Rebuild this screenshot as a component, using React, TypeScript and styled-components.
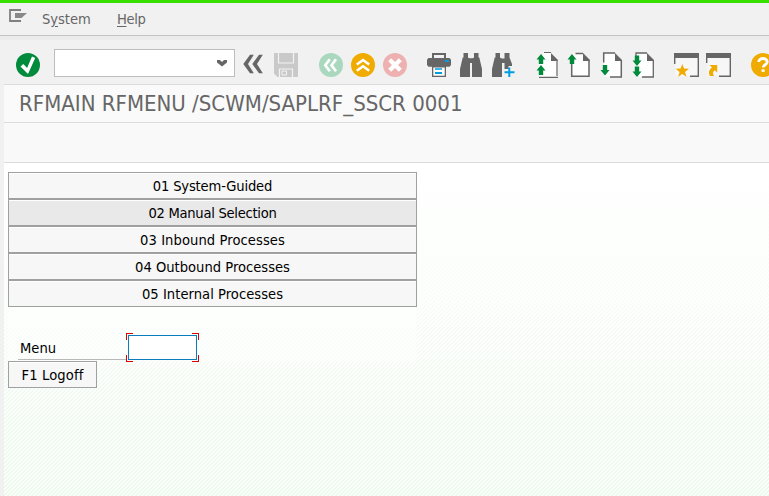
import React from 'react';
import styled, { createGlobalStyle } from 'styled-components';

const GlobalStyle = createGlobalStyle`
  * { box-sizing: border-box; }
  html, body { margin: 0; padding: 0; }
  body { overflow: hidden; background: #f1f1f1; font-family: "DejaVu Sans Condensed", "DejaVu Sans", sans-serif; font-stretch: condensed; }
`;

const Window = styled.div`
  width: 769px;
  height: 496px;
  overflow: hidden;
  display: flex;
  flex-direction: column;
  background: #f1f1f1;
  border-top: 3px solid #38e000;
`;

const MenuBar = styled.div`
  height: 37px;
  flex: none;
  display: flex;
  align-items: flex-start;
  padding-left: 9px;
  border-bottom: 4px solid #ebebeb;
  box-shadow: inset 0 -1px 0 #c3c3c3;
`;

const MenuGlyph = styled.svg`
  width: 18px;
  height: 13px;
  margin: 6px 15px 0 0;
  flex: none;
`;

const MenuItem = styled.span<{ $w: number; $ls: number }>`
  width: ${p => p.$w}px;
  margin: 7px 26px 0 0;
  font-size: 14.6px;
  line-height: 18px;
  letter-spacing: ${p => p.$ls}px;
  color: #666;
  white-space: nowrap;
  u { text-underline-offset: 2px; text-decoration-thickness: 1px; }
`;

const Toolbar = styled.div`
  height: 44px;
  flex: none;
  display: flex;
  align-items: flex-start;
  padding: 9px 0 0 16px;
`;

const Icon = styled.svg<{ $gap?: number }>`
  width: 24px;
  height: 24px;
  flex: none;
  margin: 4px 0 0 ${p => p.$gap ?? 8}px;
  overflow: visible;
`;

const Command = styled.div`
  width: 181px;
  height: 28px;
  flex: none;
  margin-left: 14px;
  padding-right: 7px;
  display: flex;
  align-items: center;
  justify-content: flex-end;
  background: #fff;
  border: 1px solid #bdbdbd;
`;

const Main = styled.div`
  margin-left: 4px;
  flex: 1;
  display: flex;
  flex-direction: column;
`;

const TitleBar = styled.div`
  height: 38px;
  flex: none;
  padding-left: 15px;
  background: #fafafa;
  border-top: 1px solid #dcdcdc;
  font-size: 22px;
  line-height: 37px;
  letter-spacing: 0.01px;
  color: #666;
  white-space: nowrap;
`;

const AppBar = styled.div`
  height: 41px;
  flex: none;
  background: #f9f9f9;
  border: solid #dcdcdc;
  border-width: 1px 0;
`;

const Canvas = styled.div`
  flex: 1;
  padding: 9px 0 0 4px;
  background:
    linear-gradient(180deg, #fff 0%, rgba(255,255,255,.72) 30%, rgba(255,255,255,.42) 60%, rgba(255,255,255,.12) 85%, rgba(255,255,255,0) 100%),
    repeating-linear-gradient(135deg, #ebf9eb 0, #ebf9eb 1.414px, #fdfffd 1.414px, #fdfffd 2.828px);
`;

const Panel = styled.div`
  width: 409px;
  height: 190px;
  background: rgba(255,255,255,.45);
`;

const ScreenButton = styled.button<{ $active?: boolean; $ls?: number; $w?: number }>`
  display: block;
  width: ${p => p.$w ?? 409}px;
  height: 27px;
  padding: 0;
  border: 1px solid #a0a0a0;
  border-radius: 0;
  box-shadow: inset 0 1px 0 #fff;
  background: ${p => (p.$active ? '#e9e9e9' : '#f7f7f7')};
  color: #000;
  font-family: inherit;
  font-stretch: condensed;
  font-size: 14.6px;
  line-height: 25px;
  letter-spacing: ${p => p.$ls ?? 0}px;
  text-align: center;
  white-space: nowrap;
`;

const FieldRow = styled.div`
  display: flex;
  margin: 26px 0 0 10px;
  height: 28px;
`;

const Label = styled.label`
  width: 108px;
  height: 27px;
  border-bottom: 1px solid #b9b9b9;
  padding-left: 2px;
  font-size: 14.6px;
  line-height: 30px;
`;

const Focus = styled.div`
  --h: linear-gradient(#d00, #d00);
  width: 73px;
  height: 29px;
  padding: 2px;
  background:
    var(--h) 0 0 / 7px 1px, var(--h) 0 0 / 1px 7px,
    var(--h) 100% 0 / 7px 1px, var(--h) 100% 0 / 1px 7px,
    var(--h) 0 100% / 7px 1px, var(--h) 0 100% / 1px 7px,
    var(--h) 100% 100% / 7px 1px, var(--h) 100% 100% / 1px 7px;
  background-repeat: no-repeat;
`;

const Input = styled.input`
  display: block;
  width: 69px;
  height: 25px;
  padding: 0 3px;
  border: 1px solid #0a7dbe;
  border-radius: 0;
  background: #fff;
  outline: none;
`;

const G = '#666';
const GREEN = '#008a3b';
const ORANGE = '#f0ab00';
const BLUE = '#009de0';

const Binoculars = () => (
  <>
    <path d="M4.500 0h4.500v4.500l2 1.500v18H1v-8L3.700 4.500h.8z" fill={G} />
    <path d="M9.500 5.500h5V10h-5z" fill={G} />
  </>
);

const UpArrow = ({ x, y }: { x: number; y: number }) => (
  <path transform={`translate(${x} ${y})`} d="M4.500 0L9 5.500H6.700V10H2.300V5.500H0z" fill={GREEN} />
);
const DownArrow = ({ x, y }: { x: number; y: number }) => (
  <path transform={`translate(${x} ${y})`} d="M4.500 10.500L9 5H6.700V0H2.300v5H0z" fill={GREEN} />
);

const Fold = () => <path d="M16 0l6.500 6.500V8H16z" fill={G} />;

const BUTTONS = [
  { text: '01 System-Guided', spacing: -0.16 },
  { text: '02 Manual Selection', active: true, spacing: -0.27 },
  { text: '03 Inbound Processes', spacing: 0.08 },
  { text: '04 Outbound Processes', spacing: 0 },
  { text: '05 Internal Processes', spacing: 0.04 },
];

export default function App() {
  return (
    <>
      <GlobalStyle />
      <Window>
        <MenuBar>
          <MenuGlyph viewBox="0 0 18 13">
            <path d="M12 1H1v11h11" fill="none" stroke="#808080" strokeWidth="1.800" />
            <path d="M6 4h12l-5.500 5H6z" fill="#888" />
          </MenuGlyph>
          <MenuItem $w={49} $ls={-0.05}>S<u>y</u>stem</MenuItem>
          <MenuItem $w={28} $ls={-0.4}><u>H</u>elp</MenuItem>
        </MenuBar>
        <Toolbar>
          <Icon $gap={0} viewBox="0 0 24 24">
            <circle cx="12" cy="12" r="12" fill={GREEN} />
            <path d="M4.500 13.600l2.800-2.500 3.800 3.900L16 3.600 19.200 5 12 21z" fill="#fff" />
          </Icon>
          <Command>
            <svg width="10" height="7" viewBox="0 0 10 7"><path d="M0 0h3l2 2 2-2h3v2.500L5 6.500 0 2.500z" fill={G} /></svg>
          </Command>
          <Icon $gap={6} viewBox="0 0 24 24">
            <path d="M2.300 11L9 1.700h3.800L7 11l5.800 9.300H9zM11.300 11L18 1.700h3.800L16 11l5.800 9.300H18z" fill={G} />
          </Icon>
          <Icon $gap={9} viewBox="0 0 24 24">
            <path d="M0 0h24v24H3.500L0 20.500z" fill="#c9c9c9" />
            <path d="M4.500 0v10h15V0M5.500 24v-8h13v8" fill="none" stroke="#f3f3f3" strokeWidth="1.200" />
            <path d="M8 18h4.500v4H8z" fill="none" stroke="#f3f3f3" strokeWidth="1" />
          </Icon>
          <Icon $gap={21} viewBox="0 0 24 24">
            <circle cx="12" cy="12" r="12" fill="#a9d8be" />
            <path d="M10.800 6.200L6.300 12.200l4.500 6M17 6.200l-4.500 6 4.500 6" fill="none" stroke="#fff" strokeWidth="2.700" />
          </Icon>
          <Icon viewBox="0 0 24 24">
            <circle cx="12" cy="12" r="12" fill={ORANGE} />
            <path d="M5.800 11.500L12 7l6.200 4.500M5.800 17.800L12 13.300l6.200 4.500" fill="none" stroke="#fff" strokeWidth="2.600" />
          </Icon>
          <Icon viewBox="0 0 24 24">
            <circle cx="12" cy="12" r="12" fill="#edb1b1" />
            <path d="M6.700 6.700l10.600 10.600M17.300 6.700L6.700 17.300" fill="none" stroke="#fff" strokeWidth="4.200" />
          </Icon>
          <Icon $gap={20} viewBox="0 0 24 24">
            <path d="M6 5.500V1h12v4.500" fill="none" stroke={G} strokeWidth="2" />
            <path d="M1.500 5h21L24 6.500v5.500l-1.500 1.700h-21L0 12V6.500z" fill={G} />
            <path d="M5 13h14v11H5z" fill={G} />
            <path d="M6.300 14.500h11.400v8.200H6.300z" fill="#fff" />
            <path d="M18 7h4v2h-4zM8 15.200h7v1.600H8zM8 19h7v2H8z" fill={BLUE} />
          </Icon>
          <Icon viewBox="0 0 24 24">
            <Binoculars />
            <g transform="translate(24 0) scale(-1 1)"><Binoculars /></g>
          </Icon>
          <Icon viewBox="0 0 24 24">
            <Binoculars />
            <path d="M13.500 0h5v4.500L21 11v2h-3.500v3H13.500z" fill={G} />
            <path d="M18.300 14.500v9.500M13.500 19.200h10" stroke={BLUE} strokeWidth="2" fill="none" />
          </Icon>
          <Icon $gap={20} viewBox="0 0 24 24">
            <path d="M9-.5h7.500l6 6V24H4V9z" fill="#fff" />
            <path d="M9-.5h7M22 7v16M4 24.300h19" stroke={G} strokeWidth="1.200" fill="none" />
            <Fold />
            <UpArrow x={1.500} y={1} /><UpArrow x={1.500} y={12} />
          </Icon>
          <Icon viewBox="0 0 24 24">
            <path d="M5 .5h11l6 6v17H5z" fill="#fff" />
            <path d="M8.500 .5H16M22 7v16.200H4.700V10" stroke={G} strokeWidth="1.500" fill="none" />
            <Fold />
            <UpArrow x={0.500} y={1} />
          </Icon>
          <Icon viewBox="0 0 24 24">
            <path d="M5 0h11l6 6v17.500H5z" fill="#fff" />
            <path d="M4.700 9.500V0H16M22.300 7v17H11" stroke={G} strokeWidth="1.500" fill="none" />
            <Fold />
            <DownArrow x={1.500} y={12} />
          </Icon>
          <Icon viewBox="0 0 24 24">
            <path d="M5 0h11l6 6v17.500H5z" fill="#fff" />
            <path d="M5 3V0h11M22.300 7v17H11" stroke={G} strokeWidth="1.300" fill="none" />
            <Fold />
            <DownArrow x={1.500} y={2.500} /><DownArrow x={1.500} y={13.500} />
          </Icon>
          <Icon $gap={19} viewBox="0 0 24 24">
            <path d="M0 0h25v5H0z" fill={G} />
            <path d="M1.300 5h22.400v17.700H1.300z" fill="#f7f7f7" />
            <path d="M.7 5v6M24.300 5v18.300H16" stroke={G} strokeWidth="1.400" fill="none" />
            <path d="M8.300 11l1.700 4.600 4.900.2L11 18.900l1.400 4.800-4.100-2.800-4.100 2.800 1.400-4.800-3.900-3.100 4.900-.2z" fill={ORANGE} />
          </Icon>
          <Icon viewBox="0 0 24 24">
            <path d="M0 0h25v5H0z" fill={G} />
            <path d="M1.300 5h22.400v17.700H1.300z" fill="#f7f7f7" />
            <path d="M.7 5v5M24.300 5v18.300H13" stroke={G} strokeWidth="1.400" fill="none" />
            <path d="M3.500 12h7.700v7.500l-2.500-2.300c-2 1.600-2.300 3.300-.7 5.800H4c-2-3.500-.8-6.500 2-8.500z" fill={ORANGE} />
          </Icon>
          <Icon $gap={21} viewBox="0 0 24 24">
            <circle cx="12" cy="12" r="12" fill={ORANGE} />
            <path d="M7.700 9c0-4.800 8.500-4.500 8.500 0 0 2.800-4 2.700-4 5.500" fill="none" stroke="#fff" strokeWidth="2.800" />
            <path d="M10.600 16.300h3v2.600h-3z" fill="#fff" />
          </Icon>
        </Toolbar>
        <Main>
          <TitleBar>RFMAIN RFMENU /SCWM/SAPLRF_SSCR 0001</TitleBar>
          <AppBar />
          <Canvas>
            <Panel>
              {BUTTONS.map(b => (
                <ScreenButton key={b.text} $active={b.active} $ls={b.spacing}>{b.text}</ScreenButton>
              ))}
              <FieldRow>
                <Label htmlFor="menu">Menu</Label>
                <Focus><Input id="menu" /></Focus>
              </FieldRow>
              <ScreenButton $w={89} $ls={0.15}>F1 Logoff</ScreenButton>
            </Panel>
          </Canvas>
        </Main>
      </Window>
    </>
  );
}
